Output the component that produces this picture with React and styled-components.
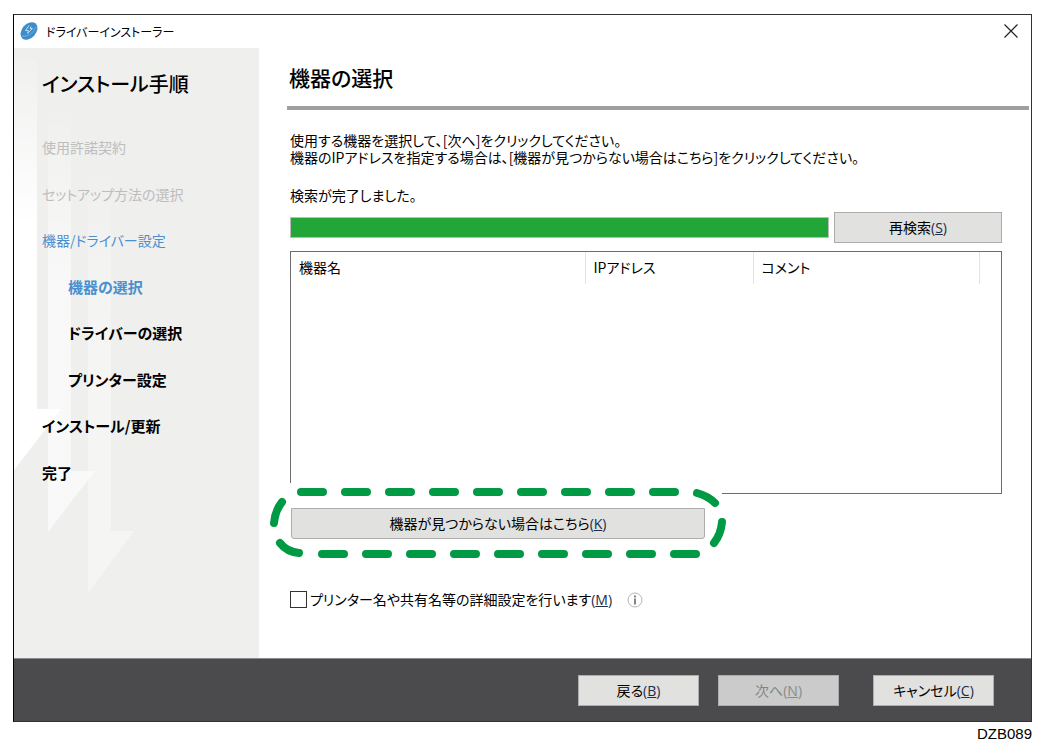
import React from 'react'
import styled, { createGlobalStyle } from 'styled-components'

const GlobalStyle = createGlobalStyle`
  * {
    box-sizing: border-box;
  }

  body {
    margin: 0;
    padding: 14px 12px 0 13px;
    background: #fff;
    color: #000;
    font-family: "Noto Sans CJK JP", sans-serif;
    font-size: 14px;
    line-height: 17px;
    font-feature-settings: "palt";
  }

  button, input {
    font: inherit;
    font-feature-settings: inherit;
    color: inherit;
  }
`

const Window = styled.div`
  border: 1px solid #333;
  border-left-color: #000;
`

const TitleBar = styled.header`
  display: flex;
  align-items: center;
  height: 33px;
  padding: 0 13px 1px 6px;
`

const WindowTitle = styled.span`
  flex: 1;
  margin-left: 8px;
  font-size: 12px;
`

const CloseButton = styled.button`
  display: flex;
  padding: 0;
  border: 0;
  background: none;
`

const Body = styled.div`
  display: flex;
`

const Sidebar = styled.nav`
  position: relative;
  flex: 0 0 245px;
  padding: 24px 28px 0;
  background: #efefee;
`

const SidebarArt = styled.svg`
  position: absolute;
  top: 0;
  left: 0;
`

const SidebarTitle = styled.h2`
  position: relative;
  margin: 0 0 41px;
  font-size: 20px;
  font-weight: 500;
  line-height: 24px;
`

const Steps = styled.ol`
  position: relative;
  display: flex;
  flex-direction: column;
  justify-content: space-between;
  height: 346px;
  margin: 0;
  padding: 0;
  list-style: none;
`

const STEP_COLORS = {
  done: '#bdbdbd',
  active: '#4a90cf',
  todo: '#000'
}

const Step = styled.li`
  padding-left: ${(props) => props.$nested ? '26px' : '0'};
  color: ${(props) => STEP_COLORS[props.$state]};
  font-size: ${(props) => props.$bold ? '15px' : '14px'};
  font-weight: ${(props) => props.$bold ? 700 : 400};
  line-height: 20px;
`

const Main = styled.main`
  flex: 1;
  min-width: 0;
  padding: 16px 2px 50px 28px;
`

const Heading = styled.h1`
  margin: 0;
  padding: 0 0 16px 2px;
  border-bottom: 4px solid #9f9f9f;
  font-size: 21px;
  font-weight: 500;
  line-height: 26px;
`

const Content = styled.div`
  padding: 22px 27px 0 3px;
`

const Text = styled.p`
  margin: 0;
`

const Status = styled(Text)`
  margin-top: 21px;
`

const SearchRow = styled.div`
  display: flex;
  align-items: center;
  gap: 5px;
  margin-top: 8px;
`

const Progress = styled.div`
  flex: 1;
  height: 21px;
  border: 1px solid #bcbcbc;
  background: #23a638;
`

const Button = styled.button`
  width: ${(props) => props.$width};
  height: 31px;
  padding: 0 0 1px;
  border: 1px solid #adadad;
  border-radius: ${(props) => props.$round ? '0 0 3px 3px' : '0'};
  background: #e1e1df;
  white-space: nowrap;

  &:disabled {
    background: #cbcbcb;
    color: #838383;
  }
`

const Key = styled.span`
  font-family: "Open Sans", sans-serif;
  font-size: 14px;
  color: ${(props) => props.$muted ? '#8a8a8a' : '#222c48'};
`

const DeviceFrame = styled.div`
  height: 243px;
  margin-top: 8px;
  border: 1px solid #6c6c6c;
`

const DeviceTable = styled.table`
  width: 100%;
  table-layout: fixed;
  border-collapse: collapse;

  th {
    height: 32px;
    padding: 0 0 2px 8px;
    border-right: 1px solid #e3e3e3;
    font-weight: 400;
    text-align: left;
  }

  th:last-child {
    border-right: 0;
  }
`

const Callout = styled.div`
  position: relative;
  width: 432px;
  margin-top: -11px;
  padding: 25px 0 24px 1px;
  background: #fff;
`

const CalloutRing = styled.svg`
  position: absolute;
  top: 0;
  left: -20px;
  fill: none;
  stroke: #009944;
  stroke-width: 8px;
  stroke-linecap: round;
  pointer-events: none;
`

const OptionRow = styled.div`
  display: flex;
  align-items: center;
  margin-top: 28px;

  label {
    margin-left: 3px;
  }

  svg {
    margin-left: 15px;
  }
`

const Checkbox = styled.input`
  appearance: none;
  width: 17px;
  height: 17px;
  margin: 0;
  border: 1px solid #333;
  background: #fff;
`

const Footer = styled.footer`
  display: flex;
  justify-content: flex-end;
  height: 63px;
  padding: 16px 37px 0;
  border-top: 1px solid #8b8c8d;
  background: #4b4b4d;

  button + button {
    margin-left: 19px;
  }

  button:last-child {
    margin-left: 34px;
  }
`

const FigureCode = styled.div`
  margin-top: 3px;
  font-family: "Liberation Sans", sans-serif;
  font-size: 15px;
  text-align: right;
`

const STEPS = [
  { label: '使用許諾契約', state: 'done' },
  { label: 'セットアップ方法の選択', state: 'done' },
  { label: '機器/ドライバー設定', state: 'active' },
  { label: '機器の選択', state: 'active', nested: true, bold: true },
  { label: 'ドライバーの選択', state: 'todo', nested: true, bold: true },
  { label: 'プリンター設定', state: 'todo', nested: true, bold: true },
  { label: 'インストール/更新', state: 'todo', bold: true },
  { label: '完了', state: 'todo', bold: true }
]

function AccessKey ({ letter, muted }) {
  return <Key $muted={muted}>(<u>{letter}</u>)</Key>
}

function AppIcon () {
  return (
    <svg width='18' height='20' viewBox='0 0 18 20' aria-hidden='true'>
      <ellipse cx='9' cy='10' rx='10' ry='7' fill='#3f8ccb' transform='rotate(-48 9 10)' />
      <path d='M9 4.5 5.5 9.5h3l-1 3 5-5H10l1-2' fill='none' stroke='#b9dcf3' strokeWidth='1' />
      <path d='M2 15c5 1 11-2 14-9' fill='none' stroke='#6fb0e0' strokeWidth='1' />
    </svg>
  )
}

function FallingArrows () {
  return (
    <SidebarArt width='135' height='560' aria-hidden='true'>
      <defs>
        <linearGradient id='fade' x1='0' y1='0' x2='0' y2='1'>
          <stop offset='0' stopColor='#fff' stopOpacity='0.1' />
          <stop offset='0.4' stopColor='#fff' stopOpacity='1' />
        </linearGradient>
      </defs>
      <path d='M0 12h23v349h24L0 422z' fill='url(#fade)' />
      <path d='M34 65h23v358h24l-47 61z' fill='url(#fade)' opacity='0.6' />
      <path d='M74 122h23v361h23l-46 62z' fill='url(#fade)' opacity='0.4' />
    </SidebarArt>
  )
}

export default function App () {
  return (
    <>
      <GlobalStyle />
      <Window>
        <TitleBar>
          <AppIcon />
          <WindowTitle>ドライバーインストーラー</WindowTitle>
          <CloseButton aria-label='閉じる'>
            <svg width='14' height='14' viewBox='0 0 14 14' stroke='#222' strokeWidth='1.2'>
              <path d='M.5.5l13 13M13.5.5l-13 13' />
            </svg>
          </CloseButton>
        </TitleBar>

        <Body>
          <Sidebar>
            <FallingArrows />
            <SidebarTitle>インストール手順</SidebarTitle>
            <Steps>
              {STEPS.map((step) => (
                <Step key={step.label} $state={step.state} $nested={step.nested} $bold={step.bold}>
                  {step.label}
                </Step>
              ))}
            </Steps>
          </Sidebar>

          <Main>
            <Heading>機器の選択</Heading>
            <Content>
              <Text>
                使用する機器を選択して、[次へ]をクリックしてください。
                <br />
                機器のIPアドレスを指定する場合は、[機器が見つからない場合はこちら]をクリックしてください。
              </Text>
              <Status id='status'>検索が完了しました。</Status>

              <SearchRow>
                <Progress role='progressbar' aria-valuenow={100} aria-labelledby='status' />
                <Button $width='168px'>再検索<AccessKey letter='S' /></Button>
              </SearchRow>

              <DeviceFrame>
                <DeviceTable>
                  <colgroup>
                    <col width='294' />
                    <col width='168' />
                    <col />
                    <col width='22' />
                  </colgroup>
                  <thead>
                    <tr>
                      <th>機器名</th>
                      <th>IPアドレス</th>
                      <th>コメント</th>
                      <th />
                    </tr>
                  </thead>
                </DeviceTable>
              </DeviceFrame>

              <Callout>
                <Button $width='414px' $round>機器が見つからない場合はこちら<AccessKey letter='K' /></Button>
                <CalloutRing width='460' height='80' aria-hidden='true'>
                  <path d='M31 9h374M52 71h374' strokeDasharray='22 22' />
                  <path d='M427 10q11 3 18 10M452 39q-1 12-8 21' />
                  <path d='M29 70q-12-1-19-10M12 19q-7 9-8 21' />
                </CalloutRing>
              </Callout>

              <OptionRow>
                <Checkbox type='checkbox' id='detail' />
                <label htmlFor='detail'>プリンター名や共有名等の詳細設定を行います<AccessKey letter='M' /></label>
                <svg width='16' height='16' viewBox='0 0 16 16' fill='none' aria-hidden='true'>
                  <circle cx='8' cy='8' r='7' stroke='#b5b5b5' />
                  <path d='M8 3.5v2M8 6.5v6' stroke='#858585' strokeWidth='2' />
                </svg>
              </OptionRow>
            </Content>
          </Main>
        </Body>

        <Footer>
          <Button $width='121px'>戻る<AccessKey letter='B' /></Button>
          <Button $width='121px' disabled>次へ<AccessKey letter='N' muted /></Button>
          <Button $width='121px'>キャンセル<AccessKey letter='C' /></Button>
        </Footer>
      </Window>
      <FigureCode>DZB089</FigureCode>
    </>
  )
}
